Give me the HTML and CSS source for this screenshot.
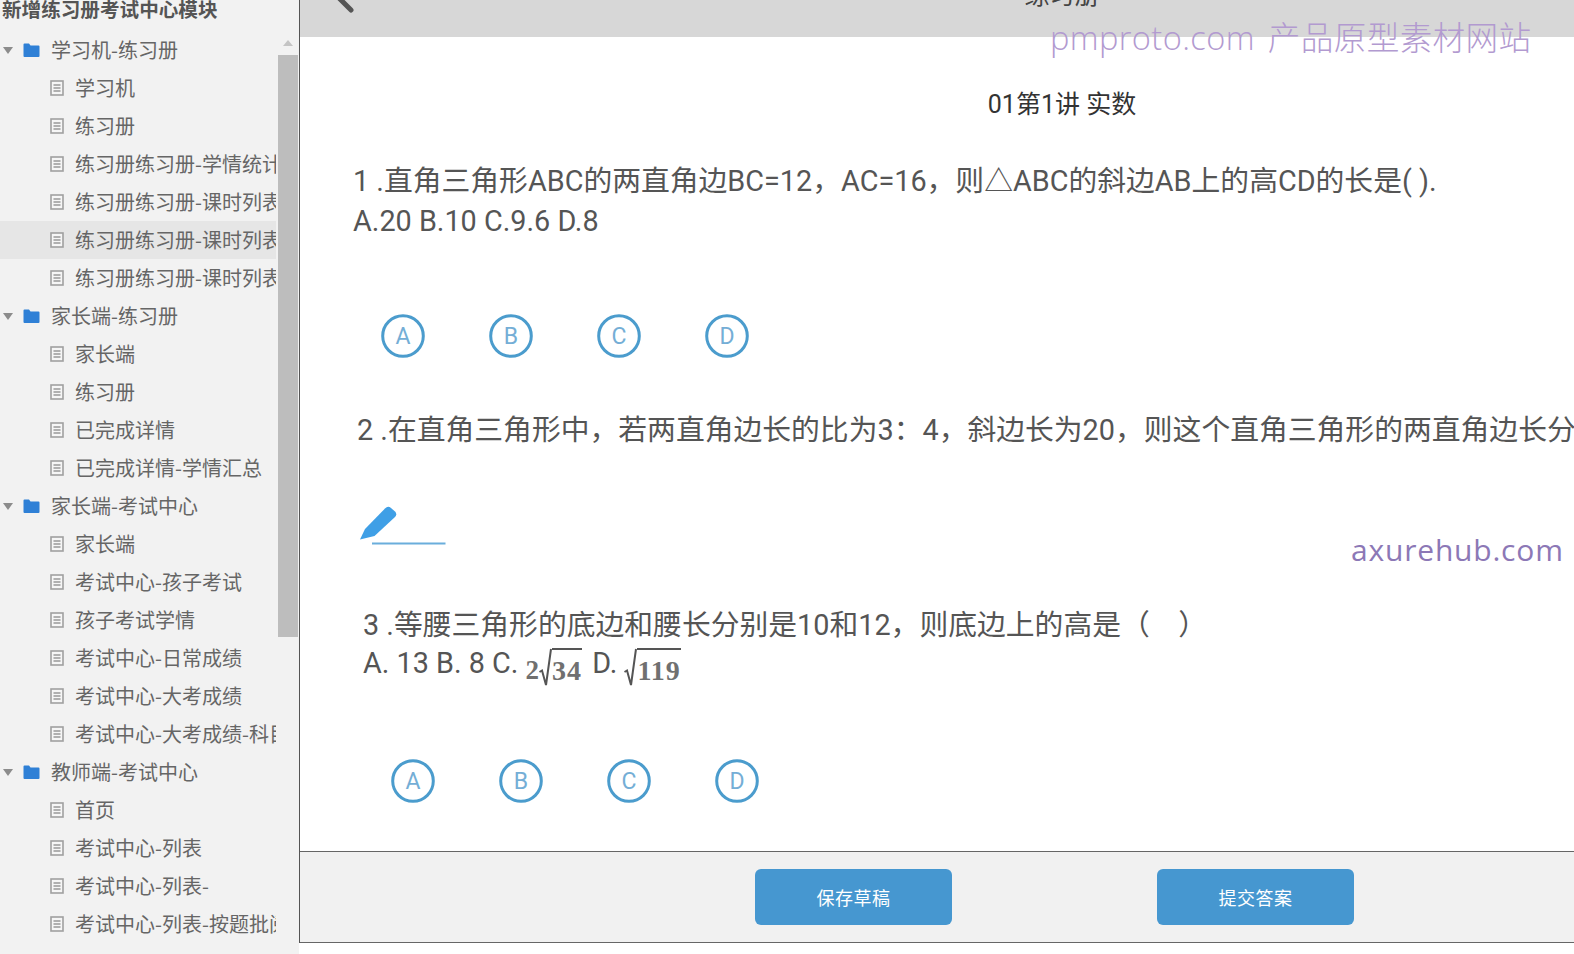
FILE: index.html
```html
<!DOCTYPE html>
<html lang="zh-CN">
<head>
    <meta charset="UTF-8">
    <title>新增练习册考试中心模块</title>
    <link rel="stylesheet" href="styles.css">
</head>
<body>
    <!-- SVG symbols shared by the tree -->
    <svg class="sprite" aria-hidden="true">
        <symbol id="doc" viewBox="0 0 14 16">
            <rect x="1" y="1" width="12" height="14" fill="#f6f6f6" stroke="#a0a0a0" stroke-width="1.6"/>
            <path d="M3.5 5h7M3.5 8h7M3.5 11h7" stroke="#999999" stroke-width="1.300"/>
        </symbol>
        <symbol id="folder" viewBox="0 0 17 14">
            <path d="M0.5 1.5a1 1 0 0 1 1-1h4.5l1.5 2h8a1 1 0 0 1 1 1v9.500a1 1 0 0 1-1 1h-14a1 1 0 0 1-1-1z" fill="#2f80d6"/>
        </symbol>
        <symbol id="circle" viewBox="0 0 44 44">
            <circle cx="22" cy="22" r="20.300" fill="none" stroke="#4b9ccd" stroke-width="3"/>
        </symbol>
    </svg>

    <!-- Sidebar -->
    <aside class="sidebar">
        <h1 class="sidebar-title">新增练习册考试中心模块</h1>
        <div class="tree-wrap">
            <ul class="tree">
                <li class="tree-row folder-row"><i class="caret"></i><svg class="folder-icon"><use href="#folder"/></svg>学习机-练习册</li>
                <li class="tree-row"><svg class="doc-icon"><use href="#doc"/></svg>学习机</li>
                <li class="tree-row"><svg class="doc-icon"><use href="#doc"/></svg>练习册</li>
                <li class="tree-row"><svg class="doc-icon"><use href="#doc"/></svg>练习册练习册-学情统计</li>
                <li class="tree-row"><svg class="doc-icon"><use href="#doc"/></svg>练习册练习册-课时列表</li>
                <li class="tree-row active"><svg class="doc-icon"><use href="#doc"/></svg>练习册练习册-课时列表</li>
                <li class="tree-row"><svg class="doc-icon"><use href="#doc"/></svg>练习册练习册-课时列表</li>
                <li class="tree-row folder-row"><i class="caret"></i><svg class="folder-icon"><use href="#folder"/></svg>家长端-练习册</li>
                <li class="tree-row"><svg class="doc-icon"><use href="#doc"/></svg>家长端</li>
                <li class="tree-row"><svg class="doc-icon"><use href="#doc"/></svg>练习册</li>
                <li class="tree-row"><svg class="doc-icon"><use href="#doc"/></svg>已完成详情</li>
                <li class="tree-row"><svg class="doc-icon"><use href="#doc"/></svg>已完成详情-学情汇总</li>
                <li class="tree-row folder-row"><i class="caret"></i><svg class="folder-icon"><use href="#folder"/></svg>家长端-考试中心</li>
                <li class="tree-row"><svg class="doc-icon"><use href="#doc"/></svg>家长端</li>
                <li class="tree-row"><svg class="doc-icon"><use href="#doc"/></svg>考试中心-孩子考试</li>
                <li class="tree-row"><svg class="doc-icon"><use href="#doc"/></svg>孩子考试学情</li>
                <li class="tree-row"><svg class="doc-icon"><use href="#doc"/></svg>考试中心-日常成绩</li>
                <li class="tree-row"><svg class="doc-icon"><use href="#doc"/></svg>考试中心-大考成绩</li>
                <li class="tree-row"><svg class="doc-icon"><use href="#doc"/></svg>考试中心-大考成绩-科目</li>
                <li class="tree-row folder-row"><i class="caret"></i><svg class="folder-icon"><use href="#folder"/></svg>教师端-考试中心</li>
                <li class="tree-row"><svg class="doc-icon"><use href="#doc"/></svg>首页</li>
                <li class="tree-row"><svg class="doc-icon"><use href="#doc"/></svg>考试中心-列表</li>
                <li class="tree-row"><svg class="doc-icon"><use href="#doc"/></svg>考试中心-列表-</li>
                <li class="tree-row"><svg class="doc-icon"><use href="#doc"/></svg>考试中心-列表-按题批阅</li>
            </ul>
            <div class="scrollbar">
                <i class="scroll-up"></i>
                <div class="scroll-thumb"></div>
            </div>
        </div>
    </aside>

    <!-- Main -->
    <main class="main">
        <header class="topbar">
            <svg class="back-icon" width="22" height="14" viewBox="0 0 22 14"><path d="M2 -4L16 10" fill="none" stroke="#555" stroke-width="5" stroke-linecap="round"/></svg>
            <span class="topbar-title">练习册</span>
        </header>

        <section class="paper">
            <h2 class="paper-title">01第1讲 实数</h2>

            <div class="question q1">
                <p>1 .直角三角形ABC的两直角边BC=12，AC=16，则△ABC的斜边AB上的高CD的长是( ).</p>
                <p>A.20 B.10 C.9.6 D.8</p>
            </div>
            <div class="options options-1">
                <div class="option"><svg><use href="#circle"/></svg><span>A</span></div>
                <div class="option"><svg><use href="#circle"/></svg><span>B</span></div>
                <div class="option"><svg><use href="#circle"/></svg><span>C</span></div>
                <div class="option"><svg><use href="#circle"/></svg><span>D</span></div>
            </div>

            <div class="question q2">
                <p>2 .在直角三角形中，若两直角边长的比为3：4，斜边长为20，则这个直角三角形的两直角边长分别是</p>
            </div>
            <div class="answer-line">
                <svg width="90" height="40" viewBox="0 0 90 40">
                    <path d="M0 34.500L5 24L25 3.500Q28 0.500 31 3L35 6.500Q37.500 9 35 12L14.500 31z" fill="#3f9fe6"/>
                    <path d="M12 38.500H85.500" stroke="#6aaedc" stroke-width="1.800"/>
                </svg>
            </div>

            <div class="question q3">
                <p>3 .等腰三角形的底边和腰长分别是10和12，则底边上的高是（&nbsp;&nbsp;&nbsp;&nbsp;）</p>
                <p class="math-line">A. 13 B. 8 C. <span class="math">2<svg class="radical" width="13" height="39" viewBox="0 0 13 39"><path d="M0.500 24L3 22.500L7 37L12 1" fill="none" stroke="#555" stroke-width="2"/></svg><span class="radicand">34</span></span> D. <span class="math"><svg class="radical" width="13" height="39" viewBox="0 0 13 39"><path d="M0.500 24L3 22.500L7 37L12 1" fill="none" stroke="#555" stroke-width="2"/></svg><span class="radicand">119</span></span></p>
            </div>
            <div class="options options-3">
                <div class="option"><svg><use href="#circle"/></svg><span>A</span></div>
                <div class="option"><svg><use href="#circle"/></svg><span>B</span></div>
                <div class="option"><svg><use href="#circle"/></svg><span>C</span></div>
                <div class="option"><svg><use href="#circle"/></svg><span>D</span></div>
            </div>
        </section>

        <footer class="actions">
            <button class="action-btn">保存草稿</button>
            <button class="action-btn">提交答案</button>
        </footer>
    </main>

    <!-- Overlays -->
    <div class="stamp stamp-pm">pmproto.com 产品原型素材网站</div>
    <div class="stamp stamp-axure">axurehub.com</div>

    <div class="wm wm-1">624EA81028<br>01501390771<br>3050DCA78C0</div>
    <div class="wm wm-2">624EA81028<br>01501390771<br>3050DCA78C0</div>
    <div class="wm wm-3">624EA81028<br>01501390771<br>3050DCA78C0</div>
    <div class="wm wm-4">624EA81028<br>01501390771<br>3050DCA78C0</div>
    <div class="wm wm-5">624EA81028<br>01501390771<br>3050DCA78C0</div>
    <div class="wm wm-6">624EA81028<br>01501390771<br>3050DCA78C0</div>
    <div class="wm wm-7">624EA81028<br>01501390771<br>3050DCA78C0</div>
</body>
</html>
```

FILE: styles.css
```css
/* General Styles */
html, body {
    height: 954px;
    overflow: hidden;
}
body {
    position: relative;
    display: flex;
    margin: 0;
    background-color: #ffffff;
    color: #555555;
    font-family: Roboto, 'Noto Sans CJK SC', sans-serif;
}
.sprite {
    display: none;
}
p, h1, h2, ul {
    margin: 0;
    padding: 0;
}
/* Sidebar Styles */
.sidebar {
    flex: none;
    width: 299px;
    height: 954px;
    background-color: #f2f2f2;
    overflow: hidden;
}
.sidebar-title {
    height: 31px;
    padding-left: 2px;
    font-size: 19.6px;
    font-weight: 700;
    line-height: 22px;
    color: #555555;
    white-space: nowrap;
}
.tree-wrap {
    display: flex;
    height: 923px;
}
.tree {
    flex: none;
    width: 276px;
    margin-right: 2px;
    list-style: none;
    overflow: hidden;
}
.tree-row {
    display: flex;
    align-items: center;
    box-sizing: border-box;
    height: 38px;
    padding: 0 0 1px 50px;
    font-family: 'Noto Sans CJK SC', sans-serif;
    font-size: 20px;
    color: #666666;
    white-space: nowrap;
}
.tree-row.active {
    background-color: #e6e6e6;
}
.folder-row {
    padding-left: 3px;
}
.caret {
    flex: none;
    width: 0;
    height: 0;
    margin: 1px 10px 0 0;
    border-left: 5px solid transparent;
    border-right: 5px solid transparent;
    border-top: 7px solid #8c8c8c;
}
.folder-icon {
    flex: none;
    width: 17px;
    height: 14px;
    margin: 1px 11px 0 0;
}
.doc-icon {
    flex: none;
    width: 14px;
    height: 16px;
    margin: 1px 11px 0 0;
}
.scrollbar {
    flex: none;
    width: 20px;
}
.scroll-up {
    display: block;
    width: 0;
    height: 0;
    margin: 9px auto 0;
    border-left: 5px solid transparent;
    border-right: 5px solid transparent;
    border-bottom: 6px solid #c4c4c4;
}
.scroll-thumb {
    height: 582px;
    margin-top: 9px;
    background-color: #bdbdbd;
}
/* Main Styles */
.main {
    flex: none;
    display: flex;
    flex-direction: column;
    width: 1274px;
    height: 943px;
    border-left: 1px solid #555555;
    overflow: hidden;
}
.topbar {
    flex: none;
    position: relative;
    height: 37px;
    margin-left: -1px;
    background-color: #d7d7d7;
    overflow: hidden;
}
.back-icon {
    position: absolute;
    left: 36px;
    top: 0;
}
.topbar-title {
    display: block;
    width: 1524px;
    margin: -22px 0 0 1px;
    font-family: 'Noto Sans CJK SC', sans-serif;
    font-size: 25px;
    line-height: 30px;
    color: #444444;
    text-align: center;
}
.paper {
    flex: 1;
    min-height: 0;
    white-space: nowrap;
}
.paper-title {
    width: 1524px;
    margin-top: 48px;
    font-size: 25px;
    font-weight: 400;
    line-height: 40px;
    color: #333333;
    text-align: center;
}
.question {
    font-size: 28.8px;
    line-height: 40px;
}
.question p {
    height: 40px;
}
.q1 {
    margin-top: 36px;
    padding-left: 53px;
}
.q2 {
    margin-top: 52px;
    padding-left: 57px;
}
.q3 {
    margin-top: 60px;
    padding-left: 63px;
}
.question .math-line {
    margin-top: -2px;
}
/* Answer circles */
.options {
    display: flex;
    gap: 64px;
}
.options-1 {
    margin-top: 73px;
    padding-left: 81px;
}
.options-3 {
    margin-top: 76px;
    padding-left: 91px;
}
.option {
    position: relative;
    display: flex;
    align-items: center;
    justify-content: center;
    width: 44px;
    height: 44px;
    font-size: 23px;
    color: #74aed6;
}
.option svg {
    position: absolute;
    left: 0;
    top: 0;
    width: 44px;
    height: 44px;
}
.answer-line {
    height: 40px;
    margin-top: 55px;
    padding-left: 60px;
}
.math {
    display: inline-flex;
    align-items: flex-start;
    height: 39px;
    margin: 5px 3px 0 0;
    vertical-align: top;
    font-family: 'Liberation Serif', serif;
    font-size: 27px;
    font-weight: 700;
    line-height: 44px;
    color: #707070;
}
.radical {
    flex: none;
}
.radicand {
    height: 37px;
    border-top: 2px solid #555555;
    font-size: 28px;
    line-height: 42px;
    letter-spacing: 1px;
}
/* Bottom bar */
.actions {
    flex: none;
    display: flex;
    gap: 205px;
    box-sizing: border-box;
    height: 92px;
    padding: 17px 0 0 455px;
    background-color: #f1f1f1;
    border-top: 1px solid #666666;
    border-bottom: 1px solid #666666;
}
.action-btn {
    width: 197px;
    height: 56px;
    border: none;
    border-radius: 6px;
    background-color: #4697d0;
    color: #ffffff;
    font-family: 'Noto Sans CJK SC', sans-serif;
    font-size: 18px;
    letter-spacing: 0.5px;
}
/* Overlay stamps */
.stamp {
    position: absolute;
    white-space: nowrap;
    font-family: 'Open Sans', 'Noto Sans CJK SC', sans-serif;
    font-weight: 300;
}
.stamp-pm {
    left: 1050px;
    top: 15px;
    font-size: 32.6px;
    line-height: 46px;
    color: #b29ad0;
    word-spacing: 4px;
    letter-spacing: 0.4px;
}
.stamp-axure {
    left: 1351px;
    top: 527px;
    font-size: 30px;
    line-height: 46px;
    color: #8c78b6;
    font-weight: 400;
    letter-spacing: 0.8px;
}
/* Faint diagonal watermarks */
.wm {
    position: absolute;
    transform: rotate(-45deg);
    font-size: 28px;
    line-height: 38px;
    color: rgba(0, 0, 0, 0.025);
    white-space: nowrap;
    pointer-events: none;
}
.wm-1 { left: 470px; top: 30px; }
.wm-2 { left: 210px; top: 260px; }
.wm-3 { left: 740px; top: 250px; }
.wm-4 { left: 1260px; top: 240px; }
.wm-5 { left: 460px; top: 520px; }
.wm-6 { left: 990px; top: 510px; }
.wm-7 { left: 1240px; top: 770px; }
```
